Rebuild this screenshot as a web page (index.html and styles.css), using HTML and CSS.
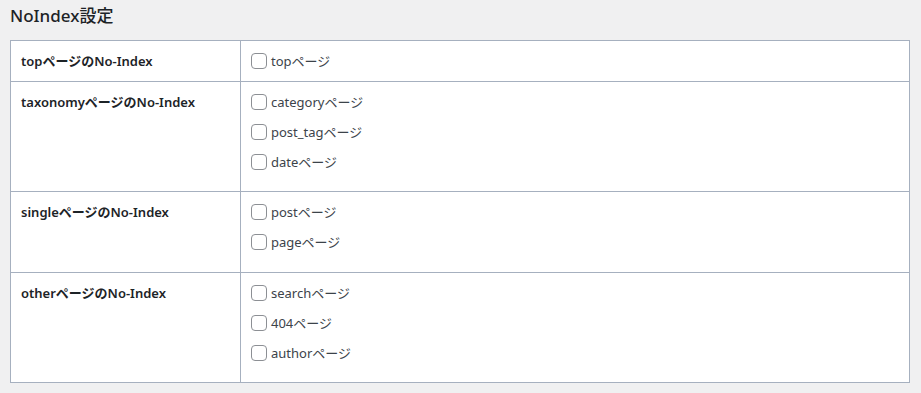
FILE: index.html
```html
<!DOCTYPE html>

<html>
<head>
    <meta charset="utf-8">
    <title>NoIndex設定</title>
    <link rel="stylesheet" href="styles.css">
</head>
<body>

    <h2 class="title">NoIndex設定</h2>

    <table class="settings">
        <tr>
            <th>topページのNo-Index</th>
            <td>
                <label class="single"><input type="checkbox"><span>topページ</span></label>
            </td>
        </tr>
        <tr>
            <th>taxonomyページのNo-Index</th>
            <td>
                <label><input type="checkbox"><span>categoryページ</span></label>
                <label><input type="checkbox"><span>post_tagページ</span></label>
                <label><input type="checkbox"><span>dateページ</span></label>
            </td>
        </tr>
        <tr>
            <th>singleページのNo-Index</th>
            <td>
                <label><input type="checkbox"><span>postページ</span></label>
                <label><input type="checkbox"><span>pageページ</span></label>
            </td>
        </tr>
        <tr>
            <th>otherページのNo-Index</th>
            <td>
                <label><input type="checkbox"><span>searchページ</span></label>
                <label><input type="checkbox"><span>404ページ</span></label>
                <label><input type="checkbox"><span>authorページ</span></label>
            </td>
        </tr>
    </table>

</body>
</html>
```

FILE: styles.css
```css
/* page */
body {
    margin: 0;
    padding: 0 10px;
    background: #f0f0f1;
    color: #3c434a;
    font-family: "Segoe UI", "Noto Sans", "Noto Sans CJK JP", sans-serif;
    font-size: 13px;
}

.title {
    margin: 0;
    padding: 5px 0 0;
    height: 35px;
    font-size: 17px;
    font-weight: 500;
    line-height: 22px;
    color: #1d2327;
}

/* table */
.settings {
    width: 900px;
    border-collapse: collapse;
    background: #fff;
}

.settings th,
.settings td {
    border: 1px solid #a6b0bf;
    padding: 10px;
    vertical-align: top;
    line-height: 20px;
}

.settings th {
    width: 209px;
    text-align: left;
    font-weight: 600;
    color: #1d2327;
}

/* checkboxes */
.settings label {
    display: flex;
    align-items: center;
    height: 20px;
    margin-bottom: 9.8px;
}

.settings label.single {
    margin-bottom: 0;
}

.settings input[type="checkbox"] {
    appearance: none;
    width: 16px;
    height: 16px;
    margin: 0 4px 0 0;
    border: 1px solid #8c8f94;
    border-radius: 4px;
    background: #fff;
}
```
